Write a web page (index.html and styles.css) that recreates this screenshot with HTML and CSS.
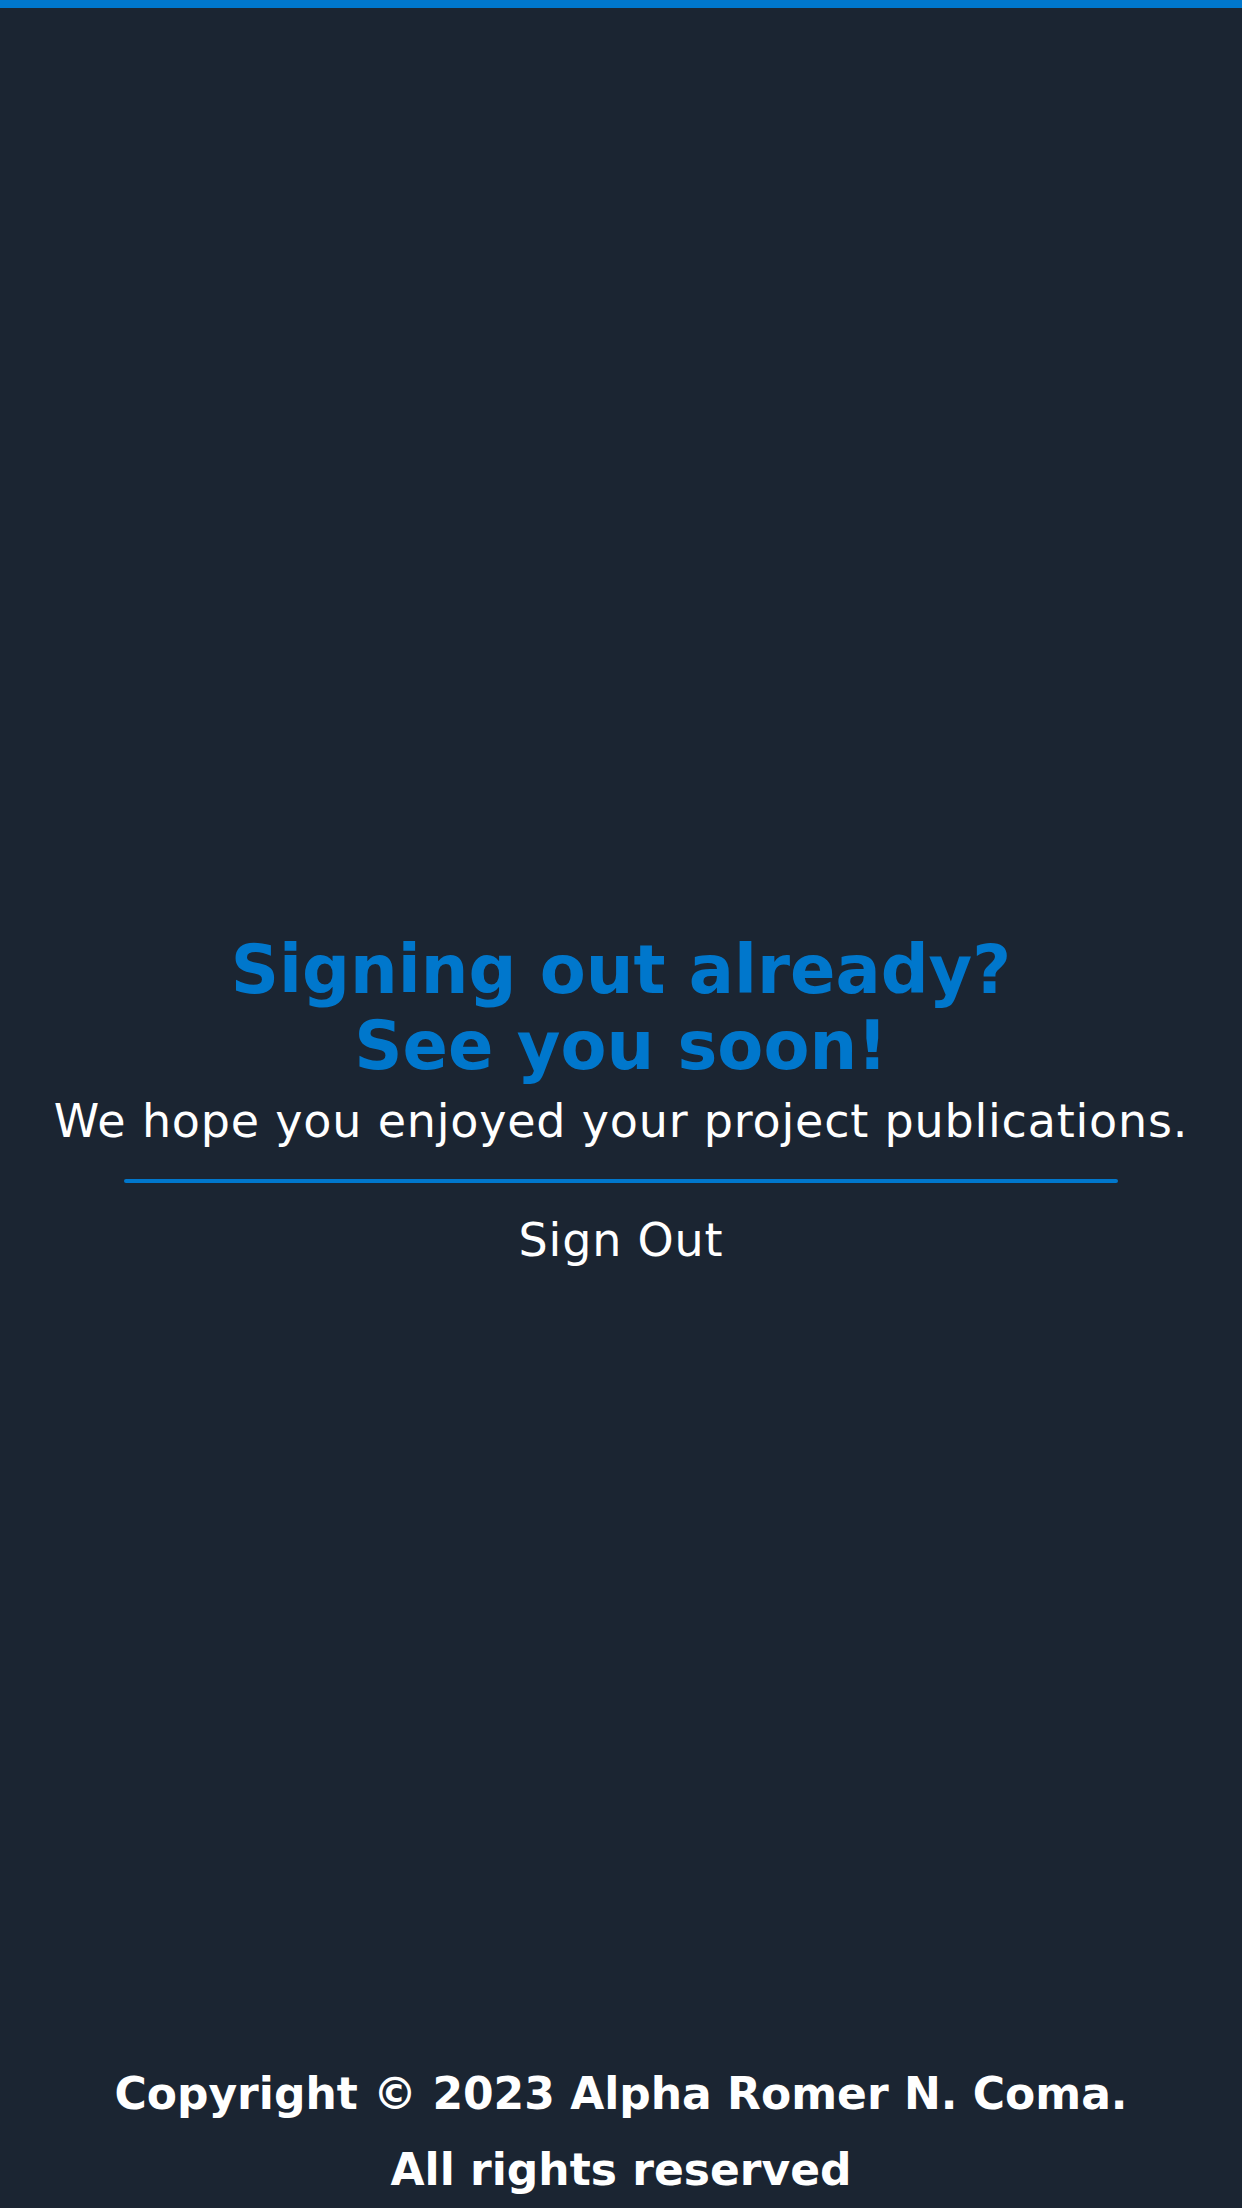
FILE: index.html
```html
<!DOCTYPE html>
<html lang="en">
<head>
<meta charset="utf-8">
<title>Sign Out</title>
<link rel="stylesheet" href="styles.css">
</head>
<body>
<div class="page">
  <div class="topbar"></div>
  <main class="main">
    <h1 class="title">Signing out already?<br>See you soon!</h1>
    <p class="message">We hope you enjoyed your project publications.</p>
    <hr class="divider">
    <a class="signout" href="#">Sign Out</a>
  </main>
  <footer class="footer">
    <p class="copy">Copyright © 2023 Alpha Romer N. Coma.<br>All rights reserved</p>
  </footer>
</div>
</body>
</html>
```
FILE: styles.css
```css
html, body {
  margin: 0;
  padding: 0;
  background: #1b2532;
}
.page {
  min-height: 100vh;
  display: flex;
  flex-direction: column;
  font-family: "DejaVu Sans", "Liberation Sans", sans-serif;
  color: #ffffff;
  text-align: center;
}
.topbar {
  height: 8px;
  background: #0077cc;
}
.main {
  flex: 1;
  display: flex;
  flex-direction: column;
  align-items: center;
  padding-top: 924px;
}
.title {
  margin: 0;
  font-size: 67px;
  line-height: 76px;
  font-weight: 700;
  color: #0077cc;
}
.message {
  margin: 10px 0 0;
  font-size: 46px;
  line-height: 54px;
  letter-spacing: 0.8px;
  white-space: nowrap;
}
.divider {
  width: 80%;
  height: 4px;
  margin: 31px 0 0;
  border: 0;
  border-radius: 2px;
  background: #0077cc;
}
.signout {
  margin-top: 30px;
  font-size: 46px;
  line-height: 54px;
  letter-spacing: 0.8px;
  color: #ffffff;
  text-decoration: none;
}
.footer {
  padding: 0;
}
.copy {
  margin: 0;
  font-size: 44px;
  line-height: 76px;
  font-weight: 700;
}
```
